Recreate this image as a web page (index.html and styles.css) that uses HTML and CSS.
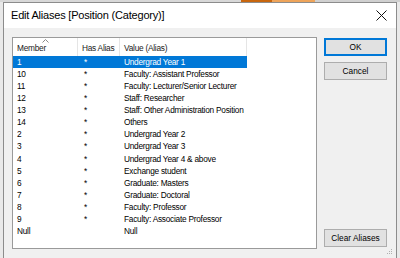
FILE: index.html
```html
<!DOCTYPE html>
<html>
<head>
<meta charset="utf-8">
<link rel="stylesheet" href="styles.css">
</head>
<body>
<div class="backdrop">
  <div class="bd-gray"></div>
  <div class="bd-orange1"></div>
  <div class="bd-orange2"></div>
  <div class="bd-rest"></div>
</div>
<div class="dialog">
  <div class="titlebar">
    <span class="title">Edit Aliases [Position (Category)]</span>
    <svg class="close" width="11" height="11" viewBox="0 0 11 11"><path d="M0.5 0.5 L10.5 10.5 M10.5 0.5 L0.5 10.5" stroke="#111" stroke-width="1" fill="none"/></svg>
  </div>
  <div class="client">
    <div class="listbox">
      <div class="header">
        <div class="hcell c1">Member<svg class="sort" width="7" height="4" viewBox="0 0 7 4"><path d="M0.5 3.5 L3.5 0.5 L6.5 3.5" stroke="#8a8a8a" fill="none" stroke-width="1"/></svg></div>
        <div class="hcell c2">Has Alias</div>
        <div class="hcell c3">Value (Alias)</div>
      </div>
      <div class="row sel"><span class="c1">1</span><span class="c2">*</span><span class="c3">Undergrad Year 1</span></div>
      <div class="row"><span class="c1">10</span><span class="c2">*</span><span class="c3">Faculty: Assistant Professor</span></div>
      <div class="row"><span class="c1">11</span><span class="c2">*</span><span class="c3">Faculty: Lecturer/Senior Lecturer</span></div>
      <div class="row"><span class="c1">12</span><span class="c2">*</span><span class="c3">Staff: Researcher</span></div>
      <div class="row"><span class="c1">13</span><span class="c2">*</span><span class="c3">Staff: Other Administration Position</span></div>
      <div class="row"><span class="c1">14</span><span class="c2">*</span><span class="c3">Others</span></div>
      <div class="row"><span class="c1">2</span><span class="c2">*</span><span class="c3">Undergrad Year 2</span></div>
      <div class="row"><span class="c1">3</span><span class="c2">*</span><span class="c3">Undergrad Year 3</span></div>
      <div class="row"><span class="c1">4</span><span class="c2">*</span><span class="c3">Undergrad Year 4 &amp; above</span></div>
      <div class="row"><span class="c1">5</span><span class="c2">*</span><span class="c3">Exchange student</span></div>
      <div class="row"><span class="c1">6</span><span class="c2">*</span><span class="c3">Graduate: Masters</span></div>
      <div class="row"><span class="c1">7</span><span class="c2">*</span><span class="c3">Graduate: Doctoral</span></div>
      <div class="row"><span class="c1">8</span><span class="c2">*</span><span class="c3">Faculty: Professor</span></div>
      <div class="row"><span class="c1">9</span><span class="c2">*</span><span class="c3">Faculty: Associate Professor</span></div>
      <div class="row"><span class="c1">Null</span><span class="c2"></span><span class="c3">Null</span></div>
    </div>
    <div class="buttons">
      <div class="btn default">OK</div>
      <div class="btn">Cancel</div>
      <div class="spacer"></div>
      <div class="btn">Clear Aliases</div>
    </div>
  </div>
  <svg class="grip" width="6" height="6" viewBox="0 0 6 6"><rect x="4" y="0" width="1" height="1" fill="#b0b0b0"/><rect x="2" y="2" width="1" height="1" fill="#b0b0b0"/><rect x="4" y="2" width="1" height="1" fill="#b0b0b0"/><rect x="0" y="4" width="1" height="1" fill="#b0b0b0"/><rect x="2" y="4" width="1" height="1" fill="#b0b0b0"/><rect x="4" y="4" width="1" height="1" fill="#b0b0b0"/></svg>
</div>
</body>
</html>
```
FILE: styles.css
```css
* { box-sizing: border-box; }
html, body { margin: 0; padding: 0; }
body {
  width: 400px;
  height: 258px;
  overflow: hidden;
  background: #e9e9e9;
  font-family: "Liberation Sans", Arial, sans-serif;
  color: #000;
  padding: 0 3px 0 3px;
}
.backdrop {
  display: flex;
  height: 2px;
  margin: 0 -3px;
}
.bd-gray { width: 241px; background: #d8d8d8; }
.bd-orange1 { width: 31px; background: #c8660e; }
.bd-orange2 { width: 43px; background: #eea45a; }
.bd-rest { flex: 1; background: #d0d0d0; }
.dialog {
  position: relative;
  border: 1px solid #8c8c8c;
  border-bottom: none;
  height: 256px;
  background: #f0f0f0;
  display: flex;
  flex-direction: column;
}
.titlebar {
  height: 25px;
  background: #ffffff;
  display: flex;
  align-items: center;
  justify-content: space-between;
  padding: 0 9px 1px 7px;
}
.title {
  font-size: 11px;
  letter-spacing: -0.2px;
  color: #000;
}
.close { display: block; }
.client {
  display: flex;
  padding: 9px 8px 0 8px;
  gap: 7px;
  height: 221px;
}
.listbox {
  width: 305px;
  height: 212px;
  background: #fff;
  border: 1px solid #9a9a9a;
  font-size: 8.3px;
  letter-spacing: -0.25px;
}
.header {
  display: flex;
  height: 18px;
  align-items: stretch;
}
.hcell {
  position: relative;
  display: flex;
  align-items: center;
  padding-left: 4px;
  padding-top: 2px;
  border-right: 1px solid #e5e5e5;
  color: #1a1a1a;
}
.sort {
  position: absolute;
  top: 1px;
  left: 29px;
}
.c1 { width: 65px; }
.c2 { width: 42px; }
.c3 { width: 127px; }
.row {
  display: flex;
  height: 12.07px;
  align-items: center;
  color: #000;
}
.row span { padding-left: 4px; white-space: nowrap; color: #000; }
.row .c2 { padding-left: 6px; }
.row.sel { background: #0078d7; width: 234px; }
.row.sel span { color: #fff; }
.buttons {
  display: flex;
  flex-direction: column;
  width: 63px;
  padding-top: 1px;
  gap: 6px;
  height: 210px;
}
.spacer { flex: 1; }
.btn {
  height: 18px;
  background: #e1e1e1;
  border: 1px solid #adadad;
  display: flex;
  align-items: center;
  justify-content: center;
  font-size: 8.3px;
  color: #000;
}
.btn.default {
  border: 2px solid #0078d7;
}
.grip {
  position: absolute;
  right: 3px;
  bottom: 3px;
}
```
